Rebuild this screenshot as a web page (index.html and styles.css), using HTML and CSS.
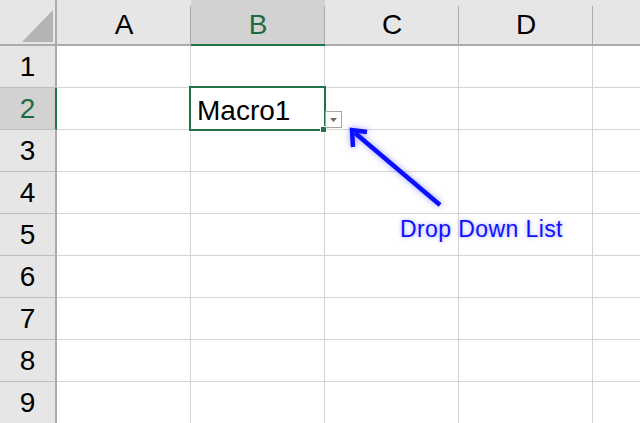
FILE: index.html
```html
<!DOCTYPE html>
<html>
<head>
<meta charset="utf-8">
<link rel="stylesheet" href="styles.css">
</head>
<body>
<div class="sheet">
  <div class="corner">
    <svg class="corner-tri" width="57" height="46" viewBox="0 0 57 46"><polygon points="22,42 53,42 53,10" fill="#b4b4b4"/></svg>
  </div>
  <div class="colhead">A</div>
  <div class="colhead sel">B</div>
  <div class="colhead">C</div>
  <div class="colhead">D</div>
  <div class="colhead last"></div>

  <div class="rowhead">1</div><div class="cell"></div><div class="cell"></div><div class="cell"></div><div class="cell"></div><div class="cell last"></div>
  <div class="rowhead sel">2</div><div class="cell"></div>
  <div class="cell active"><span class="value">Macro1</span><span class="selbox"></span><span class="handle"></span><span class="dd"><svg width="7" height="4" viewBox="0 0 7 4"><polygon points="0,0 7,0 3.5,4" fill="#6b6b6b"/></svg></span></div>
  <div class="cell"></div><div class="cell"></div><div class="cell last"></div>
  <div class="rowhead">3</div><div class="cell"></div><div class="cell"></div><div class="cell"></div><div class="cell"></div><div class="cell last"></div>
  <div class="rowhead">4</div><div class="cell"></div><div class="cell"></div><div class="cell"></div><div class="cell"></div><div class="cell last"></div>
  <div class="rowhead">5</div><div class="cell"></div><div class="cell"></div><div class="cell"></div><div class="cell"></div><div class="cell last"></div>
  <div class="rowhead">6</div><div class="cell"></div><div class="cell"></div><div class="cell"></div><div class="cell"></div><div class="cell last"></div>
  <div class="rowhead">7</div><div class="cell"></div><div class="cell"></div><div class="cell"></div><div class="cell"></div><div class="cell last"></div>
  <div class="rowhead">8</div><div class="cell"></div><div class="cell"></div><div class="cell"></div><div class="cell"></div><div class="cell last"></div>
  <div class="rowhead">9</div><div class="cell"></div><div class="cell"></div><div class="cell"></div><div class="cell"></div><div class="cell last"></div>
</div>

<svg class="arrow" width="640" height="423" viewBox="0 0 640 423">
  <g stroke="#0a10ff" stroke-width="4.5" fill="none" stroke-linecap="butt" stroke-linejoin="miter">
    <line x1="440" y1="205" x2="355" y2="133"/>
    <polyline points="367,132 352,130 353,147"/>
  </g>
</svg>
<div class="callout">Drop Down List</div>
</body>
</html>
```

FILE: styles.css
```css
html, body {
  margin: 0;
  padding: 0;
  background: #ffffff;
  overflow: hidden;
}

body {
  width: 640px;
  height: 423px;
  position: relative;
  font-family: "Liberation Sans", Arial, sans-serif;
}

.sheet {
  display: grid;
  grid-template-columns: 57px 134px 134px 134px 134px 1fr;
  grid-template-rows: 46px repeat(9, 42px);
  width: 640px;
}

.corner {
  background: #e6e6e6;
  border-right: 2px solid #ababab;
  border-bottom: 2px solid #ababab;
  box-sizing: border-box;
  position: relative;
}

.corner-tri {
  position: absolute;
  left: 0;
  top: 0;
}

.colhead {
  background: #e6e6e6;
  border-bottom: 2px solid #ababab;
  box-sizing: border-box;
  position: relative;
  display: flex;
  align-items: flex-end;
  justify-content: center;
  font-size: 28px;
  line-height: 28px;
  padding-bottom: 5px;
  color: #000;
}

.colhead::after {
  content: "";
  position: absolute;
  right: 0;
  top: 6px;
  bottom: 0;
  width: 1px;
  background: #ababab;
}

.colhead.last::after {
  display: none;
}

.colhead.sel {
  background: #d2d2d2;
  border-bottom-color: #217346;
  color: #1e6b41;
}

.rowhead {
  background: #e6e6e6;
  border-right: 2px solid #ababab;
  border-bottom: 1px solid #bdbdbd;
  box-sizing: border-box;
  display: flex;
  align-items: center;
  justify-content: center;
  font-size: 28px;
  line-height: 28px;
  padding-top: 1px;
  color: #000;
}

.rowhead.sel {
  background: #d2d2d2;
  border-right-color: #217346;
  color: #1e6b41;
}

.cell {
  border-right: 1px solid #d4d4d4;
  border-bottom: 1px solid #d4d4d4;
  box-sizing: border-box;
}

.cell.last {
  border-right: none;
}

.cell.active {
  position: relative;
  display: flex;
  align-items: flex-end;
  padding: 0 0 4px 6px;
  font-size: 28px;
  line-height: 28px;
  color: #000;
}

.selbox {
  position: absolute;
  left: -2px;
  top: -2px;
  right: -2px;
  bottom: -2px;
  border: 2px solid #217346;
}

.handle {
  position: absolute;
  right: -3px;
  bottom: -4px;
  width: 5px;
  height: 5px;
  background: #217346;
  border: 1px solid #ffffff;
}

.dd {
  position: absolute;
  left: 134px;
  top: 23px;
  width: 15px;
  height: 15px;
  background: #ffffff;
  border: 1px solid #a6a6a6;
  display: flex;
  align-items: center;
  justify-content: center;
  z-index: 2;
}

.arrow {
  position: absolute;
  left: 0;
  top: 0;
  filter: drop-shadow(0 0 3px rgba(70, 70, 255, 0.55));
}

.callout {
  position: absolute;
  left: 400px;
  top: 218px;
  font-size: 23px;
  line-height: 23px;
  letter-spacing: 0.4px;
  color: #1010ff;
  text-shadow: 0 0 4px rgba(90, 90, 255, 0.55);
  white-space: nowrap;
}
```
